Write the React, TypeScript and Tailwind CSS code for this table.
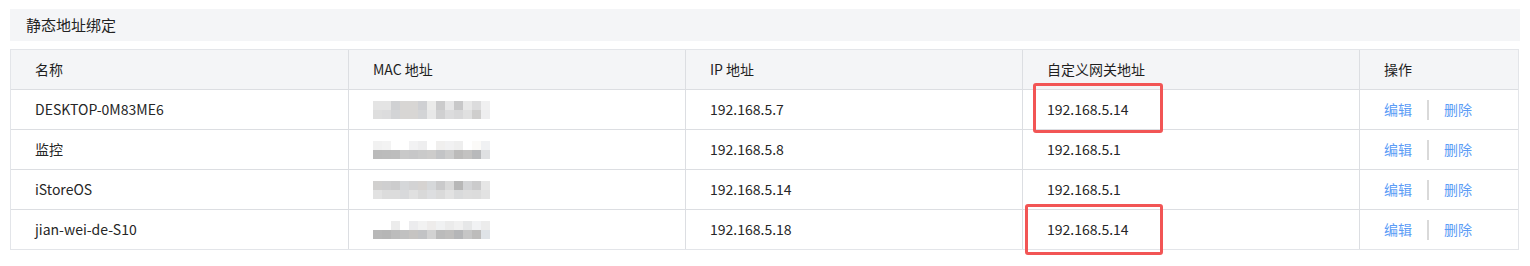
import React from 'react';

const rows = [
  { name: 'DESKTOP-0M83ME6', ip: '192.168.5.7', gw: '192.168.5.14' },
  { name: '监控', ip: '192.168.5.8', gw: '192.168.5.1' },
  { name: 'iStoreOS', ip: '192.168.5.14', gw: '192.168.5.1' },
  { name: 'jian-wei-de-S10', ip: '192.168.5.18', gw: '192.168.5.14' },
];

// pixelated (mosaic) MAC addresses, two rows of 13 cells each
const macs = [
  [
    ['#e4e4e4', '#e4e4e4', '#d0d1d3', '#d8d6d4', '#d8d6d4', '#cfd0d3', '#ebebea', '#cbcbcc', '#e6e6e7', '#c8c8c9', '#e8e8e8', '#dcdcdd', '#f0f0f1'],
    ['#dedede', '#dcdcdd', '#d3d4d6', '#d8d6d4', '#d8d6d4', '#d3d4d6', '#e8e8e8', '#d0d0d1', '#dcdcdd', '#d8d8d9', '#e0e0e0', '#cfcecd', '#eeeeef'],
  ],
  [
    ['#f1f1f1', '#f3f3f3', '#ffffff', '#ffffff', '#f2f2f3', '#eeeeef', '#ffffff', '#f0efee', '#f1f1f2', '#eeeeee', '#ffffff', '#fbfaf8', '#f0f1f3'],
    ['#bbbbbb', '#bcbcbc', '#bdbdbd', '#c9c9c9', '#c7c7c8', '#cacaca', '#cdcccb', '#c3c4c6', '#cccccc', '#bcbbba', '#c3c2c1', '#b8b9bb', '#dfe0e2'],
  ],
  [
    ['#d1d0cf', '#cfcfd0', '#cccccd', '#d5d7d9', '#d3d3d4', '#d6d3d1', '#d6d8da', '#cacacb', '#d9d9d9', '#b7b7b7', '#d3d4d6', '#cbcbcc', '#e6e6e6'],
    ['#e2e2e2', '#dcdcdc', '#dcdcdc', '#d8d9db', '#e0e0e0', '#d9d9d9', '#dddee0', '#dadada', '#e2e2e2', '#d9dadb', '#dddddd', '#dcdcdc', '#e2e2e2'],
  ],
  [
    ['#ffffff', '#ffffff', '#ececec', '#ffffff', '#ececee', '#f2f2f2', '#eeeceb', '#f0f1f2', '#ebebeb', '#f0f0f0', '#e6e7e8', '#f1f2f4', '#ececec'],
    ['#b8b8b8', '#b6b6b6', '#bcbcbc', '#c1c1c1', '#c6c4c2', '#c2c3c5', '#d2d2d2', '#bbbbbb', '#bfbebd', '#b5b6b8', '#c6c6c6', '#bdbcbb', '#dfe3e7'],
  ],
];

const col = 'grid grid-cols-[337px_337px_337px_337px_159px]';

const Mac = ({ cells }: { cells: string[][] }) => (
  <div className="flex flex-col">
    {cells.map((line, i) => (
      <div key={i} className="flex">
        {line.map((c, j) => (
          <span key={j} className="block w-[9px] h-[9px]" style={{ backgroundColor: c }} />
        ))}
      </div>
    ))}
  </div>
);

export default function App() {
  return (
    <div className="w-[1530px] h-[266px] bg-white pt-[9px] px-[10px] text-[14px] text-[#262626] font-['Noto_Sans_CJK_SC','Noto_Sans',sans-serif]">
      <div className="h-[32px] bg-[#f4f5f7] pl-[16px] flex items-center text-[15px] text-[#222]">静态地址绑定</div>

      <div className="mt-[8px] w-[1509px] border border-[#e3e5e9]">
        <div className={`${col} h-[39px] bg-[#f4f5f7] text-[#1f1f1f]`}>
          {['名称', 'MAC 地址', 'IP 地址', '自定义网关地址', '操作'].map((h, i) => (
            <div key={h} className={`flex items-center pl-[24px] ${i > 0 ? 'border-l border-[#dcdee2]' : ''}`}>
              {h}
            </div>
          ))}
        </div>

        {rows.map((r, i) => (
          <div key={r.name} className={`${col} h-[40px] border-t border-[#dcdee2]`}>
            <div className="flex items-center pl-[24px]">{r.name}</div>
            <div className="flex items-center pl-[24px] border-l border-[#dcdee2]">
              <Mac cells={macs[i]} />
            </div>
            <div className="flex items-center pl-[24px] border-l border-[#dcdee2]">{r.ip}</div>
            <div className="relative flex items-center pl-[24px] border-l border-[#dcdee2]">
              {r.gw}
              {i === 0 && (
                <span className="absolute left-[10px] top-[-7px] w-[130px] h-[50px] border-[3px] border-[#f25555] rounded-[3px]" />
              )}
              {i === 3 && (
                <span className="absolute left-[2px] top-[-6px] w-[138px] h-[51px] border-[3px] border-[#f25555] rounded-[3px]" />
              )}
            </div>
            <div className="flex items-center pl-[24px] border-l border-[#dcdee2] text-[#5b9cf6]">
              <span>编辑</span>
              <span className="mx-[15px] w-[2px] h-[20px] bg-[#d9d9d9]" />
              <span>删除</span>
            </div>
          </div>
        ))}
      </div>
    </div>
  );
}
